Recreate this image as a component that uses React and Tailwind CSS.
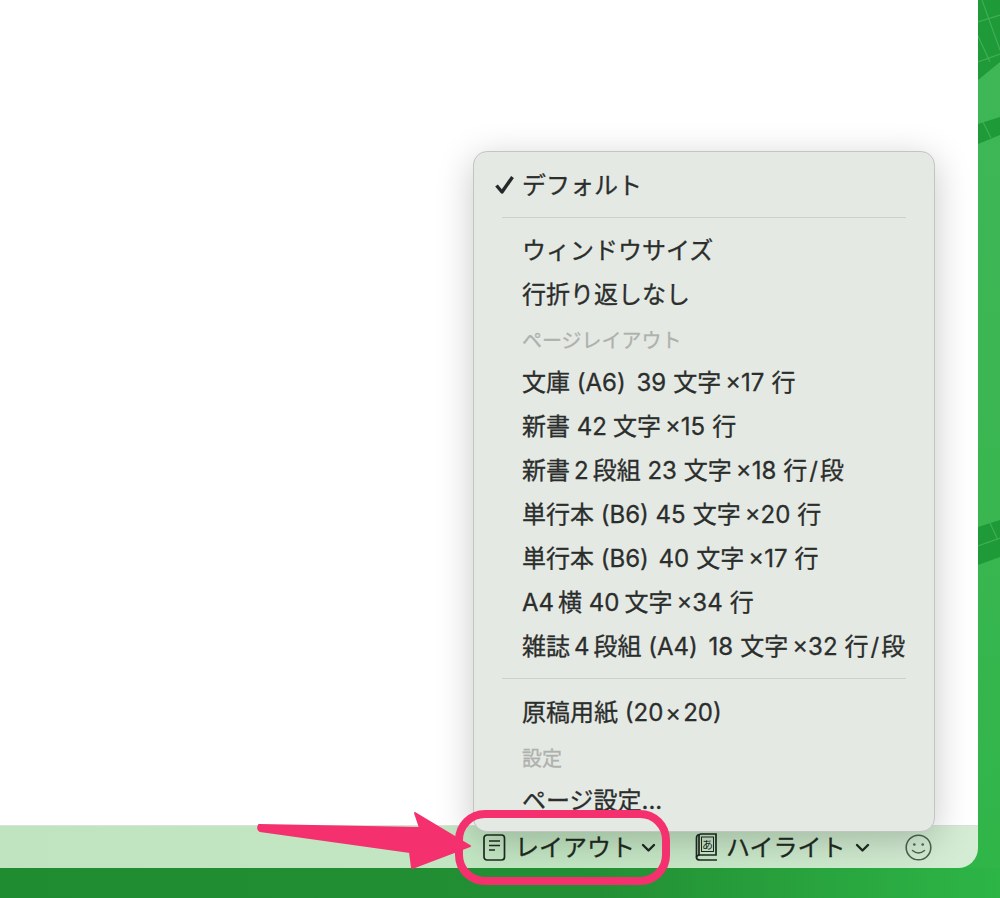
const JP = "[font-family:'Inter','Noto_Sans_CJK_JP',sans-serif]";

const GAP = {
  2: "w-[2px]",
  3: "w-[3px]",
  4: "w-[4px]",
  5: "w-[5px]",
  6: "w-[6px]",
  7: "w-[7px]",
};

function G({ w = 4 }) {
  return <span className={`inline-block ${GAP[w]}`} />;
}

function Item({ children, check }) {
  return (
    <div className="relative flex h-[44px] items-center pl-[48px] text-[24px] leading-none text-[#2b2e2c] whitespace-pre [-webkit-text-stroke:0.3px_#2b2e2c]">
      {check && (
        <svg className="absolute left-[20px] top-[10px]" width="21" height="21" viewBox="0 0 21 21" fill="none">
          <path d="M2.500 11.500 L8 18 L18.500 3" stroke="#26292a" strokeWidth="3.400" strokeLinejoin="round" />
        </svg>
      )}
      {children}
    </div>
  );
}

function Label({ children }) {
  return (
    <div className="flex h-[44px] items-center pl-[48px] pt-[3px] text-[20px] leading-none text-[#aeb1ae] [-webkit-text-stroke:0.3px_#aeb1ae]">{children}</div>
  );
}

function Chevron() {
  return (
    <svg className="mt-[1px]" width="15" height="10" viewBox="0 0 15 10" fill="none">
      <path d="M2 2 L7.500 7.500 L13 2" stroke="#1f2b22" strokeWidth="2.400" strokeLinecap="round" strokeLinejoin="round" />
    </svg>
  );
}

function DocIcon() {
  return (
    <svg width="23" height="27" viewBox="0 0 23 27" fill="none" stroke="#1f2b22">
      <rect x="1" y="1" width="20.500" height="25" rx="3" strokeWidth="1.700" />
      <path d="M6 7 H17 M6 11.500 H17 M6 16 H12" strokeWidth="1.500" />
    </svg>
  );
}

function BookIcon() {
  return (
    <svg width="24" height="28" viewBox="0 0 24 28" fill="none" stroke="#1f2b22">
      <path d="M4 22 V3 Q4 1 6 1 H21 V22 H5 Q1.500 22 1.500 24.500 Q1.500 27 5 27 H22" strokeWidth="1.700" />
      <path d="M1.500 24.500 V5 Q1.500 2 4 1.500" strokeWidth="1.700" />
      <rect x="6.500" y="4" width="12" height="14.500" strokeWidth="1" />
      <text x="12.500" y="15.500" textAnchor="middle" fontSize="11" fill="#1f2b22" stroke="none" fontFamily="Noto Sans CJK JP">あ</text>
    </svg>
  );
}

function SmileIcon() {
  return (
    <svg width="27" height="27" viewBox="0 0 27 27" fill="none" stroke="#4d6350">
      <circle cx="13.500" cy="13.500" r="12.300" strokeWidth="1.600" />
      <circle cx="9.300" cy="10.500" r="1.300" fill="#4d6350" stroke="none" />
      <circle cx="17.700" cy="10.500" r="1.300" fill="#4d6350" stroke="none" />
      <path d="M7.500 16.500 Q13.500 21.500 19.500 16.500" strokeWidth="1.500" strokeLinecap="round" />
    </svg>
  );
}

function Pattern() {
  return (
    <svg className="absolute right-0 top-0" width="22" height="600" viewBox="0 0 22 600">
      <path d="M0 0 H22 V62 L0 80 Z" fill="#1f9a38" />
      <path d="M0 22 L22 15 M0 62 L22 54 M4 0 L22 50 M0 36 L12 62" stroke="#3fae55" strokeWidth="1.200" fill="none" />
      <path d="M0 124 L22 117 V135 L0 144 Z" fill="#1f9a38" />
      <path d="M5 122 L13 138" stroke="#3fae55" strokeWidth="1.200" />
      <path d="M0 527 L22 520 V557 L0 565 Z" fill="#1f9a38" />
      <path d="M0 546 L22 538 M12 523 L20 540" stroke="#3fae55" strokeWidth="1.200" fill="none" />
    </svg>
  );
}

export default function App() {
  return (
    <div className={`relative flex h-[898px] w-[1000px] flex-col overflow-hidden bg-[linear-gradient(170deg,#41b75a_0%,#3ab651_60%,#2fb548_100%)] ${JP}`}>
      <Pattern />
      <div className="relative z-10 flex h-[868px] w-[978px] flex-col overflow-hidden rounded-br-[20px]">
        <div className="h-[825px] bg-white" />
        <div className="flex h-[43px] items-center border-t border-[#dcdfdc] bg-[linear-gradient(90deg,#c0e4c0_0%,#c3e6c3_60%,#d4ecd4_100%)] pl-[483px] text-[24px] leading-none text-[#1f2b22] [-webkit-text-stroke:0.3px_#1f2b22]">
          <DocIcon />
          <span className="ml-[9px] mt-[2px]">レイアウト</span>
          <span className="ml-[6px]"><Chevron /></span>
          <span className="ml-[39px]"><BookIcon /></span>
          <span className="ml-[7px] mt-[2px]">ハイライト</span>
          <span className="ml-[9px]"><Chevron /></span>
          <span className="ml-[35px]"><SmileIcon /></span>
        </div>
        <div className="absolute left-[473px] top-[151px] h-[681px] w-[462px] rounded-[14px] border border-[#c3c5c2] bg-[#e5e9e4] pt-[12px] shadow-[0_8px_36px_rgba(0,0,0,0.22)]">
          <Item check>デフォルト</Item>
          <div className="mx-[28px] mb-[11px] mt-[9px] h-px bg-[#cdd1cc]" />
          <Item>ウィンドウサイズ</Item>
          <Item>行折り返しなし</Item>
          <Label>ページレイアウト</Label>
          <Item>文庫 (A6)<G w={4} /> 39<G w={7} />文字<G />×17<G w={7} />行</Item>
          <Item>新書 42<G w={6} />文字<G />×15<G w={7} />行</Item>
          <Item>新書<G />2<G />段組 23<G w={7} />文字<G />×18<G w={7} />行<G w={2} />/<G w={2} />段</Item>
          <Item>単行本 (B6) 45<G w={7} />文字<G />×20<G w={7} />行</Item>
          <Item>単行本 (B6)<G w={3} /> 40<G w={7} />文字<G />×17<G w={7} />行</Item>
          <Item>A4<G />横 40<G w={5} />文字<G />×34<G w={7} />行</Item>
          <Item>雑誌<G />4<G />段組 (A4)<G w={4} /> 18<G w={7} />文字<G />×32<G w={7} />行<G w={2} />/<G w={2} />段</Item>
          <div className="mx-[28px] mb-[12px] mt-[9px] h-px bg-[#cdd1cc]" />
          <Item>原稿用紙 (20<G w={2} />×<G w={2} />20)</Item>
          <Label>設定</Label>
          <Item>ページ設定...</Item>
        </div>
      </div>
      <div className="h-[30px] w-full bg-[linear-gradient(90deg,#1f8c32_0%,#238f34_60%,#2db546_100%)]" />
      <div className="absolute left-[455px] top-[810px] z-20 h-[75px] w-[215px] rounded-[30px] border-[8px] border-[#f4306e]" />
      <svg className="absolute left-[250px] top-[805px] z-20" width="230" height="72" viewBox="0 0 230 72" fill="none">
        <path d="M9 20 Q7 24 10 26 L160 47 L162 63 L220 41 L165 8 L170 23 Z" fill="#f4306e" stroke="#f4306e" strokeWidth="2" strokeLinejoin="round" />
      </svg>
    </div>
  );
}
